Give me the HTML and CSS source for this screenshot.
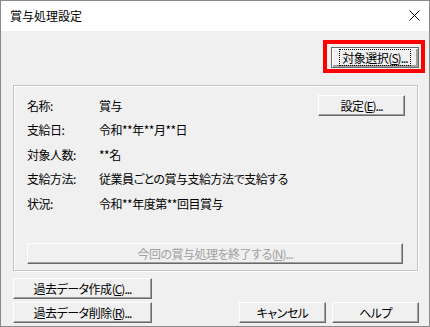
FILE: index.html
```html
<!DOCTYPE html>
<html lang="ja">
<head>
<meta charset="utf-8">
<title>賞与処理設定</title>
<link rel="stylesheet" href="styles.css">
</head>
<body>
<div class="window">
  <div class="titlebar">
    <span class="title">賞与処理設定</span>
    <svg class="close" width="11" height="11" viewBox="0 0 11 11"><path d="M0.5 0.5 L10.5 10.5 M10.5 0.5 L0.5 10.5" stroke="#000" stroke-width="1" fill="none"/></svg>
  </div>
  <div class="content">
    <div class="toprow">
      <div class="highlight">
        <button class="btn default"><span class="focus">対象選択<span class="acc">(<u>S</u>)...</span></span></button>
      </div>
    </div>
    <div class="group">
      <div class="group-top">
        <div class="info">
          <div class="row"><span class="label">名称:</span><span class="value">賞与</span></div>
          <div class="row"><span class="label">支給日:</span><span class="value">令和**年**月**日</span></div>
          <div class="row"><span class="label">対象人数:</span><span class="value">**名</span></div>
          <div class="row"><span class="label">支給方法:</span><span class="value">従業員ごとの賞与支給方法で支給する</span></div>
          <div class="row"><span class="label">状況:</span><span class="value">令和**年度第**回目賞与</span></div>
        </div>
        <button class="btn small">設定<span class="acc">(<u>E</u>)...</span></button>
      </div>
      <button class="btn wide" disabled>今回の賞与処理を終了する<span class="acc">(<u>N</u>)...</span></button>
    </div>
    <div class="bottom">
      <div class="left-col">
        <button class="btn long">過去データ作成<span class="acc">(<u>C</u>)...</span></button>
        <button class="btn long">過去データ削除<span class="acc">(<u>R</u>)...</span></button>
      </div>
      <div class="right-btns">
        <button class="btn small">キャンセル</button>
        <button class="btn small">ヘルプ</button>
      </div>
    </div>
  </div>
</div>
</body>
</html>
```
FILE: styles.css
```css
* { box-sizing: border-box; }
html, body { margin: 0; padding: 0; background: #ffffff; }
body {
  font-family: "Noto Sans CJK JP", "Noto Sans", sans-serif;
  font-size: 12px;
  color: #000;
}
.window {
  width: 430px;
  height: 327px;
  border: 1px solid #8a8a8a;
  display: flex;
  flex-direction: column;
  background: #f0f0f0;
}
.titlebar {
  height: 30px;
  background: #ffffff;
  display: flex;
  align-items: center;
  justify-content: space-between;
  padding: 0 9px 0 9px;
  flex: none;
}
.title { font-size: 12px; line-height: 1; }
.close { display: block; margin-top: -1px; }
.content {
  flex: 1;
  display: flex;
  flex-direction: column;
  padding: 9px 0 0 0;
  font-feature-settings: "palt";
  letter-spacing: -0.5px;
}
.toprow {
  display: flex;
  justify-content: flex-end;
  padding-right: 4px;
}
.highlight {
  border: 4px solid #ff0000;
  padding: 3px 2px 1px 4px;
}
.btn {
  font-family: inherit;
  font-size: 12px;
  font-feature-settings: "palt";
  letter-spacing: -0.5px;
  line-height: 1;
  color: #000;
  background: #f0f0f0;
  height: 21px;
  padding: 0;
  margin: 0;
  border-top: 1px solid #ffffff;
  border-left: 1px solid #ffffff;
  border-right: 1px solid #696969;
  border-bottom: 1px solid #696969;
  box-shadow: inset -1px -1px 0 #a0a0a0;
  display: flex;
  align-items: center;
  justify-content: center;
  border-radius: 0;
}
.acc { letter-spacing: -1px; }
.btn u { text-underline-offset: 1px; }
.default {
  width: 88px;
  border: 1px solid #6a6a6a;
  box-shadow: inset 1px 1px 0 #ffffff, inset -1px -1px 0 #a0a0a0, inset -2px -2px 0 #a0a0a0;
}
.focus {
  border: 1px dotted #000;
  padding: 1px 2px;
  line-height: 13px;
}
.group {
  margin: 12px 11px 0 12px;
  height: 186px;
  border: 1px solid #c4c4c4;
  box-shadow: inset 1px 1px 0 #ffffff, 1px 1px 0 #ffffff;
  padding: 7px 12px 6px 13px;
  display: flex;
  flex-direction: column;
}
.group-top {
  display: flex;
  justify-content: space-between;
  align-items: flex-start;
}
.info { display: flex; flex-direction: column; }
.row {
  height: 24.5px;
  display: flex;
  align-items: center;
}
.label { width: 72px; flex: none; }
.small { width: 87px; }
.group-top .small { margin-top: 2px; }
.wide {
  width: 376px;
  margin-top: auto;
  color: #a0a0a0;
}
.bottom {
  margin-top: 7px;
  display: flex;
  justify-content: space-between;
  align-items: flex-end;
  padding: 0 10px 4px 12px;
}
.left-col { display: flex; flex-direction: column; gap: 3px; }
.long { width: 139px; }
.right-btns { display: flex; gap: 6px; }
```
